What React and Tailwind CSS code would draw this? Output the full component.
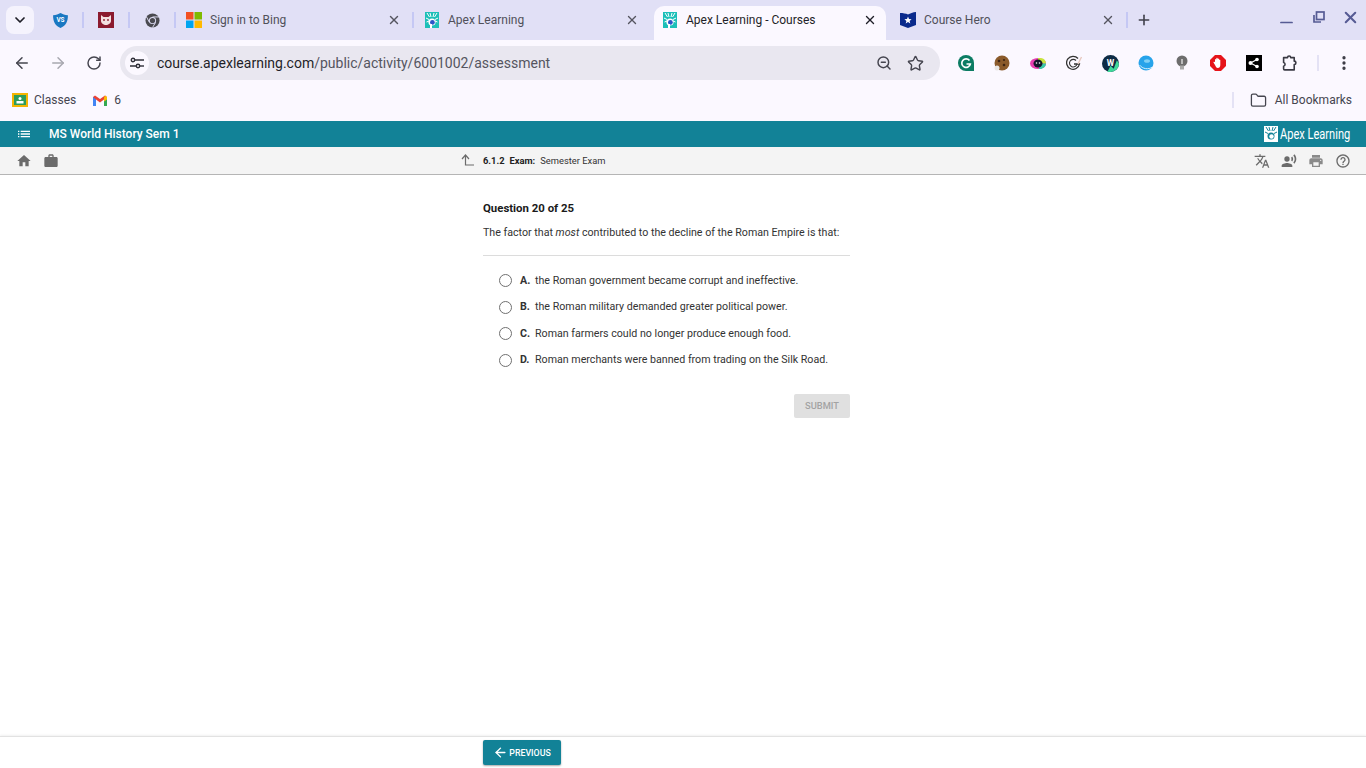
import { ArrowLeft, ArrowRight, RotateCw, ZoomOut, Star, X, Plus, ChevronDown, Folder, EllipsisVertical, Minus } from "lucide-react";

// Favicons and small logos are drawn by hand
function ApexIcon({ className }) {
  return (
    <svg viewBox="0 0 14 16" className={className}>
      <rect width="14" height="16" fill="#1cbfb8" />
      <path d="M2 1l2.500 4M5 1l1 4M9 1L8 5M12 1L9.500 5M1 6l3 1.500M13 6l-3 1.500M1.500 10l2.500-1M12.500 10L10 9" stroke="#fff" strokeWidth="1" />
      <circle cx="7" cy="10" r="3.600" fill="#fff" />
      <circle cx="7.400" cy="10.400" r="2.400" fill="#2b55c9" />
      <rect x="5" y="12" width="2" height="4" fill="#fff" />
    </svg>
  );
}

function WindowsIcon() {
  return (
    <svg viewBox="0 0 16 16" className="w-4 h-4 shrink-0">
      <rect width="7.500" height="7.500" fill="#f25022" />
      <rect x="8.500" width="7.500" height="7.500" fill="#7fba00" />
      <rect y="8.500" width="7.500" height="7.500" fill="#00a4ef" />
      <rect x="8.500" y="8.500" width="7.500" height="7.500" fill="#ffb900" />
    </svg>
  );
}

function CourseHeroIcon() {
  return (
    <svg viewBox="0 0 16 16" className="w-4 h-4 shrink-0">
      <path d="M0 1c3 0 6 .5 8 1.500 2-1 5-2.500 8-2.500v13l-8 3-8-3z" fill="#0a2a8c" />
      <path d="M8 4.500l1 2.500 2.600.2-2 1.700.7 2.600L8 10.100l-2.300 1.400.7-2.600-2-1.700L7 7z" fill="#fff" />
    </svg>
  );
}

function Sep() {
  return <div className="w-[2px] h-4 bg-[#c5c8f4] shrink-0" />;
}

function TabClose({ dark }) {
  return <X size={14} strokeWidth={2.400} className={dark ? "text-[#1f1f28]" : "text-[#55555f]"} />;
}

function Tabs() {
  return (
    <div className="h-10 bg-[#e1e0f6] flex items-start pt-[6px] pl-[6px] shrink-0">
      <button className="w-7 h-7 bg-[#f5f3fd] rounded-lg flex items-center justify-center shrink-0">
        <ChevronDown size={16} strokeWidth={2.600} className="text-[#1f1f28]" />
      </button>

      {/* pinned tabs */}
      <div className="h-7 flex items-center">
        <div className="w-[48px] pl-1 flex justify-center">
          <svg viewBox="0 0 16 16" className="w-[17px] h-[17px]">
            <path d="M1 3c3 0 5-1 7-2 2 1 4 2 7 2 0 6-2 10-7 12C3 13 1 9 1 3z" fill="#1a78c2" />
            <text x="8" y="9.500" fontSize="6" fontWeight="700" fill="#fff" textAnchor="middle" fontFamily="Roboto">VS</text>
          </svg>
        </div>
        <Sep />
        <div className="w-11 flex justify-center">
          <svg viewBox="0 0 16 16" className="w-4 h-4">
            <rect width="16" height="16" fill="#8b1a2e" />
            <path d="M3 3l2.500 2h5L13 3v6c0 2-2.500 4-5 4s-5-2-5-4z" fill="#f3dfe0" />
            <circle cx="6" cy="8" r=".9" fill="#8b1a2e" />
            <circle cx="10" cy="8" r=".9" fill="#8b1a2e" />
          </svg>
        </div>
        <Sep />
        <div className="w-11 flex justify-center">
          <svg viewBox="0 0 16 16" className="w-[15px] h-[15px]">
            <circle cx="8" cy="8" r="7.500" fill="#4a4a50" />
            <circle cx="8" cy="8" r="3.800" fill="#e1e0f6" />
            <circle cx="8" cy="8" r="2.800" fill="#4a4a50" />
            <path d="M8 4.200h7M4.700 10L1.500 4M11.300 10L8 15.500" stroke="#e1e0f6" strokeWidth="1" />
          </svg>
        </div>
        <Sep />
      </div>

      <div className="w-[236px] h-7 flex items-center pl-[10px] pr-[11px] shrink-0">
        <WindowsIcon />
        <span className="ml-2 text-[12px] text-[#50505a] flex-1">Sign in to Bing</span>
        <TabClose />
      </div>
      <div className="h-7 flex items-center"><Sep /></div>
      <div className="w-[240px] h-7 flex items-center pl-[11px] pr-[15px] shrink-0">
        <ApexIcon className="w-[14px] h-4 shrink-0" />
        <span className="ml-[9px] text-[12px] text-[#50505a] flex-1">Apex Learning</span>
        <TabClose />
      </div>

      {/* active tab */}
      <div className="w-[232px] h-[34px] bg-[#fbf8ff] rounded-t-[10px] px-[9px] shrink-0">
        <div className="h-7 flex items-center">
          <ApexIcon className="w-[14px] h-4 shrink-0" />
          <span className="ml-[9px] text-[12px] text-[#1f1f28] flex-1">Apex Learning - Courses</span>
          <TabClose dark />
        </div>
      </div>

      <div className="w-[240px] h-7 flex items-center pl-[14px] pr-[11px] shrink-0">
        <CourseHeroIcon />
        <span className="ml-2 text-[12px] text-[#50505a] flex-1">Course Hero</span>
        <TabClose />
      </div>
      <div className="h-7 flex items-center"><Sep /></div>
      <div className="h-7 w-[32px] flex items-center justify-center">
        <Plus size={16} strokeWidth={2.400} className="text-[#3f3f4a]" />
      </div>

      {/* window controls */}
      <div className="h-7 flex items-center ml-auto pr-[6px] gap-[13px] text-[#565b94]">
        <Minus size={19} strokeWidth={2.200} className="translate-y-[2px] -translate-x-[1px]" />
        <svg viewBox="0 0 12 12" className="w-[12px] h-[12px] -translate-y-[3px] mx-[3px]" fill="none" stroke="currentColor" strokeWidth="1.700">
          <rect x="3.500" y="1" width="7.500" height="7.500" />
          <path d="M1 4v7h7" />
        </svg>
        <X size={19} strokeWidth={2.600} className="-translate-y-[3px]" />
      </div>
    </div>
  );
}

function Ext({ children }) {
  return <div className="w-9 flex justify-center">{children}</div>;
}

function ExtIcons() {
  return (
    <div className="flex items-center">
      <Ext>
        <svg viewBox="0 0 16 16" className="w-4 h-4">
          <path d="M8 0a8 8 0 0 1 8 8v8H8A8 8 0 0 1 8 0z" fill="#0c7c63" />
          <path d="M11.500 5.500A4.300 4.300 0 1 0 12.300 9H8.500" fill="none" stroke="#fff" strokeWidth="1.700" />
        </svg>
      </Ext>
      <Ext>
        <svg viewBox="0 0 16 16" className="w-4 h-4">
          <circle cx="8" cy="8" r="7.500" fill="#8a5a2b" />
          <circle cx="5" cy="6" r="1.300" fill="#3d2412" />
          <circle cx="10" cy="5" r="1.100" fill="#3d2412" />
          <circle cx="10" cy="10" r="1.300" fill="#3d2412" />
          <circle cx="3" cy="13" r="2.500" fill="#e9e6e4" />
        </svg>
      </Ext>
      <Ext>
        <svg viewBox="0 0 16 16" className="w-4 h-4">
          <ellipse cx="8" cy="8.500" rx="8" ry="5.500" fill="#e83fb0" />
          <path d="M8 3h2.500C14 3 16 6 16 8.500H8z" fill="#c8e63c" />
          <path d="M9 14h1c3 0 6-2.500 6-5.500H9z" fill="#37c9a6" />
          <ellipse cx="8" cy="8.500" rx="4.500" ry="4" fill="#15152a" />
          <circle cx="6.500" cy="8" r=".8" fill="#fff" />
          <circle cx="9.500" cy="8" r=".8" fill="#fff" />
        </svg>
      </Ext>
      <Ext>
        <svg viewBox="0 0 16 16" className="w-4 h-4" fill="none">
          <path d="M12 3.500A6.500 6.500 0 1 0 13.500 9H8" stroke="#333" strokeWidth="1.300" />
          <path d="M10 5.500A3.800 3.800 0 1 0 11 9" stroke="#333" strokeWidth="1.100" />
          <path d="M12 9l3.500-7" stroke="#e8c9c0" strokeWidth="1.400" />
        </svg>
      </Ext>
      <Ext>
        <svg viewBox="0 0 16 16" className="w-[17px] h-[17px]">
          <circle cx="8" cy="8" r="8" fill="#0d2b45" />
          <path d="M5 16l3-6 3 3 3-8 2 3a8 8 0 0 1-8 8z" fill="#3ed89a" />
          <text x="8" y="10.500" fontSize="8" fontWeight="700" fill="#fff" textAnchor="middle" fontFamily="Roboto">W</text>
        </svg>
      </Ext>
      <Ext>
        <svg viewBox="0 0 16 16" className="w-4 h-4">
          <circle cx="8" cy="8" r="7.500" fill="#27a3ea" />
          <path d="M1.500 10c3 4 9 5 13 2" stroke="#d5effc" strokeWidth="1" fill="none" />
          <ellipse cx="9" cy="6" rx="3" ry="1.800" fill="#7fd0f6" />
        </svg>
      </Ext>
      <Ext>
        <svg viewBox="0 0 16 16" className="w-4 h-4">
          <circle cx="8" cy="6" r="5.500" fill="#6d6d6d" />
          <rect x="6" y="10.500" width="4" height="4" fill="#a9a9a9" />
          <rect x="7.200" y="4" width="1.600" height="5" fill="#d0d0d0" />
        </svg>
      </Ext>
      <Ext>
        <svg viewBox="0 0 16 16" className="w-4 h-4">
          <path d="M5 0h6l5 5v6l-5 5H5l-5-5V5z" fill="#e6141a" />
          <path d="M5 7V4.500a.7.7 0 0 1 1.300 0V3.500a.7.7 0 0 1 1.400 0v.5a.7.700 0 0 1 1.300 0v1a.7.700 0 0 1 1.300 0V10c0 2-1 3-2.500 3S6 12 5 10L3.500 7.500c-.3-.7.6-1.200 1.100-.6z" fill="#fff" />
        </svg>
      </Ext>
      <Ext>
        <svg viewBox="0 0 16 16" className="w-4 h-4">
          <rect width="16" height="16" fill="#000" />
          <path d="M4.500 8L11 4.500M4.500 8l6.500 3.500" stroke="#fff" strokeWidth="1.200" />
          <circle cx="4.500" cy="8" r="2" fill="#fff" />
          <circle cx="11" cy="4.500" r="1.800" fill="#fff" />
          <circle cx="11" cy="11.500" r="1.800" fill="#fff" />
        </svg>
      </Ext>
      <Ext>
        {/* outline of Chrome's extensions piece */}
        <svg viewBox="0 0 16 16" className="w-[17px] h-[17px]" fill="none" stroke="#3a3a44" strokeWidth="1.500" strokeLinejoin="round">
          <path d="M1.500 2.500h3.700a1.500 1.500 0 0 1 3 0h3.300v3.300a1.600 1.600 0 0 1 0 3.200v5H2.500a1 1 0 0 1-1-1v-2.500a1.800 1.800 0 0 0 0-3.500z" />
        </svg>
      </Ext>
    </div>
  );
}

function Toolbar() {
  return (
    <div className="h-[46px] bg-[#fbf8ff] flex items-start pt-[6px] shrink-0">
      <div className="w-[120px] h-[34px] flex items-center pl-[13px] gap-[18px] text-[#45454f] shrink-0">
        <ArrowLeft size={18} strokeWidth={2} />
        <ArrowRight size={18} strokeWidth={2} className="text-[#a8a8b0]" />
        <RotateCw size={16} strokeWidth={2.200} className="ml-[1px]" />
      </div>
      <div className="w-[820px] h-[34px] rounded-full bg-[#e9e7f0] flex items-center pl-[5px] pr-[16px] shrink-0">
        <div className="w-6 h-6 rounded-full bg-[#fbf8ff] flex items-center justify-center shrink-0">
          <svg viewBox="0 0 14 12" className="w-[14px] h-3" fill="none" stroke="#2f2f38" strokeWidth="1.400">
            <path d="M5 3h9M0 9h6" />
            <circle cx="3" cy="3" r="1.700" />
            <circle cx="8" cy="9" r="1.700" />
            <path d="M10 9h4" />
          </svg>
        </div>
        <span className="ml-2 text-[14px] text-[#55555f]">
          <span className="text-[#1f1f28]">course.apexlearning.com</span>/public/activity/6001002/assessment
        </span>
        <ZoomOut size={16} strokeWidth={2.200} className="ml-auto text-[#45454f]" />
        <Star size={17} strokeWidth={2} className="ml-[15px] text-[#45454f]" />
      </div>
      <div className="h-[34px] flex items-center ml-2">
        <ExtIcons />
        <div className="w-[2px] h-4 bg-[#e4e2f5] ml-[9px]" />
        <EllipsisVertical size={18} strokeWidth={2.400} className="ml-4 text-[#3a3a44]" />
      </div>
    </div>
  );
}

function Bookmarks() {
  return (
    <div className="h-[35px] bg-[#fbf8ff] flex items-start pl-3 pr-[14px] shrink-0 text-[12px] text-[#45454f]">
      <div className="h-7 flex items-center">
        <svg viewBox="0 0 16 14" className="w-4 h-[14px]">
          <rect width="16" height="14" fill="#f4b400" />
          <rect x="2" y="2" width="12" height="10" fill="#2e9c5a" />
          <circle cx="8" cy="5.500" r="1.500" fill="#fff" />
          <rect x="4.500" y="8" width="7" height="2.500" fill="#fff" />
        </svg>
        <span className="ml-[6px]">Classes</span>
      </div>
      <div className="h-7 flex items-center ml-[17px]">
        <svg viewBox="0 0 14 11" className="w-[14px] h-[11px]">
          <path d="M0 2v9h3V4.500L7 7.500l4-3V11h3V2L12 .5 7 4 2 .5z" fill="#ea4335" />
          <path d="M0 2v9h3V4.500z" fill="#4285f4" />
          <path d="M14 2v9h-3V4.500z" fill="#34a853" />
          <path d="M14 2v2.500L11 6.500V2.800L12 .5z" fill="#fbbc04" />
        </svg>
        <span className="ml-[7px]">6</span>
      </div>
      <div className="h-7 flex items-center ml-auto">
        <div className="w-[2px] h-4 bg-[#e4e2f5] mr-4" />
        <Folder size={17} strokeWidth={1.800} className="text-[#45454f]" />
        <span className="ml-2">All Bookmarks</span>
      </div>
    </div>
  );
}

function AppBar() {
  return (
    <div className="h-[26px] bg-[#128297] flex items-center pl-4 pr-4 shrink-0 text-white">
      <svg viewBox="0 0 24 24" className="w-4 h-4" fill="currentColor">
        <path d="M3 13h2v-2H3v2zm0 4h2v-2H3v2zm0-8h2V7H3v2zm4 4h14v-2H7v2zm0 4h14v-2H7v2zM7 7v2h14V7H7z" />
      </svg>
      <span className="ml-[17px] text-[12px] font-medium">MS World History Sem 1</span>
      <div className="ml-auto flex items-center">
        <svg viewBox="0 0 14 16" className="w-[14px] h-4">
          <rect width="14" height="16" fill="#fff" />
          <path d="M2 1l2.500 4M5 1l1 4M9 1L8 5M12 1L9.500 5M1 6l3 1.500M13 6l-3 1.500" stroke="#128297" strokeWidth="1" />
          <circle cx="7" cy="10" r="3.500" fill="#128297" />
          <circle cx="7.500" cy="10.500" r="2.200" fill="#fff" />
        </svg>
        <div className="ml-[2px] w-[70px]">
          <span className="block origin-left scale-x-[0.79] text-[14px] leading-none whitespace-nowrap">Apex Learning</span>
        </div>
      </div>
    </div>
  );
}

function SubBar() {
  return (
    <div className="h-7 bg-[#f4f4f4] border-b border-[#b5b5b5] flex items-center pl-[16px] pr-[15px] shrink-0">
      <svg viewBox="0 0 24 24" className="w-4 h-4" fill="#6b6b6b">
        <path d="M10 20v-6h4v6h5v-8h3L12 3 2 12h3v8z" />
      </svg>
      <svg viewBox="0 0 24 24" className="w-4 h-4 ml-[11px]" fill="#6b6b6b">
        <path d="M20 6h-4V4c0-1.110-.89-2-2-2h-4c-1.110 0-2 .89-2 2v2H4c-1.110 0-1.990.89-1.990 2L2 19c0 1.110.89 2 2 2h16c1.110 0 2-.89 2-2V8c0-1.110-.89-2-2-2zm-6 0h-4V4h4v2z" />
      </svg>

      <div className="ml-[402px] flex items-center">
        <svg viewBox="0 0 14 12" className="w-[14px] h-3" fill="none" stroke="#6b6b6b" strokeWidth="1.200">
          <path d="M1 5l3.500-4L8 5M4.500 1v10H13" />
        </svg>
        <span className="ml-[8px] text-[9.350px] font-bold text-[#222] translate-y-[0.5px]">6.1.2</span>
        <span className="ml-[5px] text-[9.350px] font-bold text-[#222] translate-y-[0.5px]">Exam:</span>
        <span className="ml-[5px] text-[9.350px] text-[#333] translate-y-[0.5px]">Semester Exam</span>
      </div>

      <div className="ml-auto flex items-center gap-[11px] text-[#6b6b6b]">
        <svg viewBox="0 0 24 24" className="w-4 h-4" fill="currentColor">
          <path d="M12.870 15.070l-2.540-2.510.03-.03c1.740-1.940 2.980-4.170 3.710-6.530H17V4h-7V2H8v2H1v1.990h11.170C11.500 7.920 10.440 9.750 9 11.350 8.070 10.320 7.300 9.190 6.690 8h-2c.73 1.630 1.730 3.170 2.980 4.560l-5.090 5.020L4 19l5-5 3.110 3.110.76-2.040zM18.500 10h-2L12 22h2l1.120-3h4.750L21 22h2l-4.500-12zm-2.620 7l1.620-4.330L19.120 17h-3.240z" />
        </svg>
        <svg viewBox="0 0 24 24" className="w-4 h-4" fill="currentColor">
          <circle cx="9" cy="9" r="4" />
          <path d="M9 15c-2.670 0-8 1.340-8 4v2h16v-2c0-2.660-5.330-4-8-4zm7.760-9.640l-1.680 1.690c.84 1.180.84 2.710 0 3.890l1.680 1.690c2.020-2.020 2.020-5.070 0-7.270zM20.070 2l-1.630 1.630c2.770 3.020 2.770 7.560 0 10.740L20.070 16c3.900-3.890 3.910-9.950 0-14z" />
        </svg>
        <svg viewBox="0 0 24 24" className="w-4 h-4" fill="#8a8a8a">
          <path d="M19 8H5c-1.660 0-3 1.340-3 3v6h4v4h12v-4h4v-6c0-1.660-1.340-3-3-3zm-3 11H8v-5h8v5zm3-7c-.55 0-1-.45-1-1s.45-1 1-1 1 .45 1 1-.45 1-1 1zm-1-9H6v4h12V3z" />
        </svg>
        <svg viewBox="0 0 24 24" className="w-4 h-4" fill="currentColor">
          <path d="M11 18h2v-2h-2v2zm1-16C6.480 2 2 6.480 2 12s4.480 10 10 10 10-4.480 10-10S17.520 2 12 2zm0 18c-4.410 0-8-3.590-8-8s3.590-8 8-8 8 3.590 8 8-3.590 8-8 8zm0-14c-2.210 0-4 1.790-4 4h2c0-1.100.9-2 2-2s2 .9 2 2c0 2-3 1.750-3 5h2c0-2.250 3-2.500 3-5 0-2.210-1.790-4-4-4z" />
        </svg>
      </div>
    </div>
  );
}

const opcoes = [
  { letra: "A.", texto: "the Roman government became corrupt and ineffective." },
  { letra: "B.", texto: "the Roman military demanded greater political power." },
  { letra: "C.", texto: "Roman farmers could no longer produce enough food." },
  { letra: "D.", texto: "Roman merchants were banned from trading on the Silk Road." },
];

function Question() {
  return (
    <main className="flex-1 bg-white">
      <div className="w-[367px] ml-[483px] pt-[26px]">
        <h2 className="text-[11.400px] leading-[14px] font-bold text-[#1a1a1a]">Question 20 of 25</h2>
        <p className="mt-[11px] text-[10.670px] leading-[14px] text-[#333]">
          The factor that <em>most</em> contributed to the decline of the Roman Empire is that:
        </p>
        <div className="h-px bg-[#dcdcdc] mt-[15px]" />
        <div className="mt-[11.500px] pl-[16px]">
          {opcoes.map((o) => (
            <div key={o.letra} className="h-[26.500px] flex items-center text-[10.670px] text-[#333]">
              <div className="w-[13px] h-[13px] rounded-full border border-[#707070] bg-white shrink-0" />
              <span className="ml-[8px] font-bold w-[15px]">{o.letra}</span>
              <span>{o.texto}</span>
            </div>
          ))}
        </div>
        <div className="flex justify-end mt-[20px]">
          <button className="w-[56px] h-6 rounded-[2px] bg-[#e0e0e0] text-[9.300px] font-medium text-[#a3a3a3]">SUBMIT</button>
        </div>
      </div>
    </main>
  );
}

function Footer() {
  return (
    <footer className="h-[32px] bg-white border-t border-[#e2e2e2] shadow-[0_-1px_2px_rgba(0,0,0,0.06)] pl-[483px] pt-[3px] shrink-0">
      <button className="w-[78px] h-[25px] bg-[#128297] rounded-[2px] shadow-[0_1px_2px_rgba(0,0,0,0.35)] flex items-center justify-center text-white text-[8.800px] font-medium">
        <ArrowLeft size={15} strokeWidth={2.200} />
        <span className="ml-[1px] translate-y-[0.5px]">PREVIOUS</span>
      </button>
    </footer>
  );
}

export default function App() {
  return (
    <div className="w-[1366px] h-[768px] overflow-hidden flex flex-col font-['Roboto',sans-serif] bg-white">
      <Tabs />
      <Toolbar />
      <Bookmarks />
      <AppBar />
      <SubBar />
      <Question />
      <Footer />
    </div>
  );
}
